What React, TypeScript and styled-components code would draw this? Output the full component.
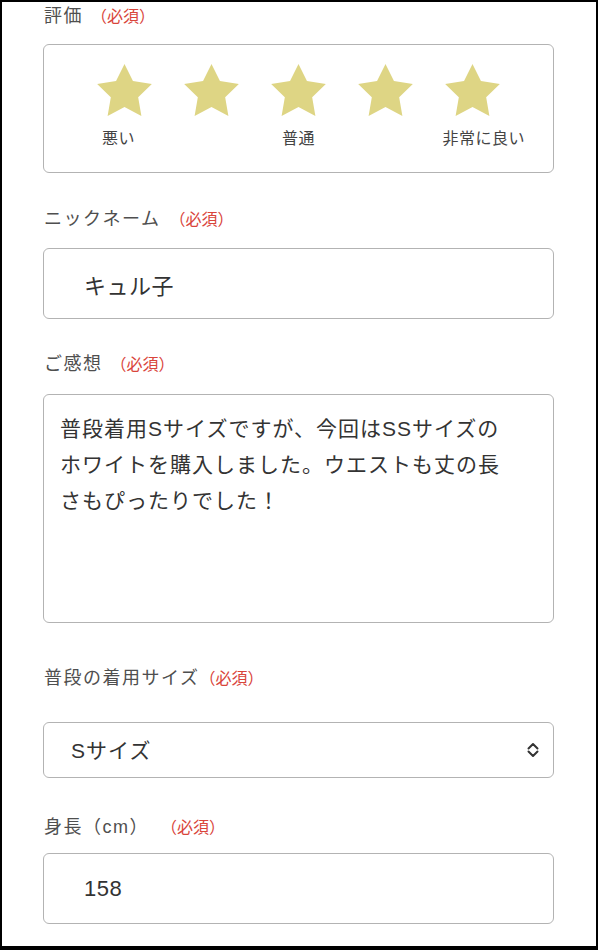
import styled, { createGlobalStyle } from 'styled-components';

const GlobalStyle = createGlobalStyle`
    html, body {
        margin: 0;
        padding: 0;
        background: #fff;
    }
    body {
        font-family: "Liberation Sans", "Noto Sans CJK JP", sans-serif;
    }
`

const Page = styled.div`
    width: 598px;
    height: 950px;
    box-sizing: border-box;
    border: 2px solid #000;
    border-bottom-width: 4px;
    background: #fff;
    overflow: hidden;
`
const Form = styled.form`
    padding: 0 42px 0 41px;
`
const Field = styled.div<{ $top: number }>`
    margin-top: ${(p) => p.$top}px;
`
const Label = styled.div<{ $gap: number }>`
    height: 28px;
    padding-left: 1px;
    margin-bottom: ${(p) => p.$gap}px;
    font-size: 18px;
    line-height: 28px;
    letter-spacing: 1.5px;
    color: #4f4f4f;
    white-space: nowrap;
`
const Required = styled.span<{ $space: number }>`
    margin-left: ${(p) => p.$space}px;
    font-size: 16px;
    line-height: 28px;
    letter-spacing: 0;
    color: #d9453b;
`
const RatingBox = styled.div`
    box-sizing: border-box;
    height: 129px;
    padding-top: 19px;
    border: 1px solid #b3b3b3;
    border-radius: 6px;
`
const StarRow = styled.div`
    display: flex;
    justify-content: center;
    gap: 32px;
`
const StarLabels = styled.div`
    display: grid;
    grid-template-columns: 1fr auto 1fr;
    margin-top: 12px;
    font-size: 16px;
    line-height: 22px;
    letter-spacing: 0.5px;
    color: #444;
`
const StarLabel = styled.span<{ $align: 'start' | 'center' | 'end'; $inset?: number }>`
    justify-self: ${(p) => p.$align};
    margin-left: ${(p) => (p.$align === 'start' ? p.$inset ?? 0 : 0)}px;
    margin-right: ${(p) => (p.$align === 'end' ? p.$inset ?? 0 : 0)}px;
`
const TextInput = styled.input<{ $pad: number }>`
    display: block;
    width: 100%;
    height: 71px;
    box-sizing: border-box;
    padding: 0 0 0 ${(p) => p.$pad}px;
    border: 1px solid #b3b3b3;
    border-radius: 6px;
    background: #fff;
    font-family: inherit;
    font-size: 22px;
    letter-spacing: 0.5px;
    color: #333;
    outline: none;
`
const TextArea = styled.textarea`
    display: block;
    width: 100%;
    height: 229px;
    box-sizing: border-box;
    padding: 16px 16px;
    border: 1px solid #b3b3b3;
    border-radius: 6px;
    background: #fff;
    font-family: inherit;
    font-size: 21px;
    line-height: 36px;
    letter-spacing: 1px;
    color: #333;
    resize: none;
    overflow: hidden;
    outline: none;
`
const SelectWrap = styled.div`
    position: relative;
`
const Select = styled.select`
    display: block;
    width: 100%;
    height: 56px;
    box-sizing: border-box;
    padding: 0 0 0 27px;
    border: 1px solid #b3b3b3;
    border-radius: 6px;
    background: #fff;
    appearance: none;
    font-family: inherit;
    font-size: 21px;
    letter-spacing: 1px;
    color: #333;
    outline: none;
`
const SelectIcon = styled.svg`
    position: absolute;
    right: 15px;
    top: 20px;
    pointer-events: none;
`

const Star = () => (
    <svg width="55" height="52" viewBox="2 2 20 19.02">
        <polygon
            points="12,2 15.09,8.26 22,9.27 17,14.14 18.18,21.02 12,17.77 5.82,21.02 7,14.14 2,9.27 8.91,8.26"
            fill="#ded584"
        />
    </svg>
)

const comment = '普段着用Sサイズですが、今回はSSサイズの\nホワイトを購入しました。ウエストも丈の長\nさもぴったりでした！'

const App = () => {
    return (
        <Page>
            <GlobalStyle />
            <Form>
                <Field $top={0}>
                    <Label $gap={14}>
                        評価<Required $space={8}>（必須）</Required>
                    </Label>
                    <RatingBox>
                        <StarRow>
                            {[1, 2, 3, 4, 5].map((n) => (
                                <Star key={n} />
                            ))}
                        </StarRow>
                        <StarLabels>
                            <StarLabel $align="start" $inset={58}>悪い</StarLabel>
                            <StarLabel $align="center">普通</StarLabel>
                            <StarLabel $align="end" $inset={28}>非常に良い</StarLabel>
                        </StarLabels>
                    </RatingBox>
                </Field>

                <Field $top={32}>
                    <Label $gap={15}>
                        ニックネーム<Required $space={9}>（必須）</Required>
                    </Label>
                    <TextInput $pad={40} defaultValue="キュル子" />
                </Field>

                <Field $top={31}>
                    <Label $gap={16}>
                        ご感想<Required $space={8}>（必須）</Required>
                    </Label>
                    <TextArea defaultValue={comment} />
                </Field>

                <Field $top={41}>
                    <Label $gap={30}>
                        普段の着用サイズ<Required $space={0}>（必須）</Required>
                    </Label>
                    <SelectWrap>
                        <Select defaultValue="S">
                            <option value="SS">SSサイズ</option>
                            <option value="S">Sサイズ</option>
                            <option value="M">Mサイズ</option>
                            <option value="L">Lサイズ</option>
                        </Select>
                        <SelectIcon width="12" height="16" viewBox="0 0 12 16">
                            <path
                                d="M1.5 6.5 L6 2 L10.5 6.5 M1.5 9.5 L6 14 L10.5 9.5"
                                fill="none"
                                stroke="#333"
                                strokeWidth="2"
                                strokeLinecap="round"
                                strokeLinejoin="round"
                            />
                        </SelectIcon>
                    </SelectWrap>
                </Field>

                <Field $top={35}>
                    <Label $gap={12}>
                        身長（cm）<Required $space={20}>（必須）</Required>
                    </Label>
                    <TextInput $pad={40} defaultValue="158" />
                </Field>
            </Form>
        </Page>
    )
}

export default App;
